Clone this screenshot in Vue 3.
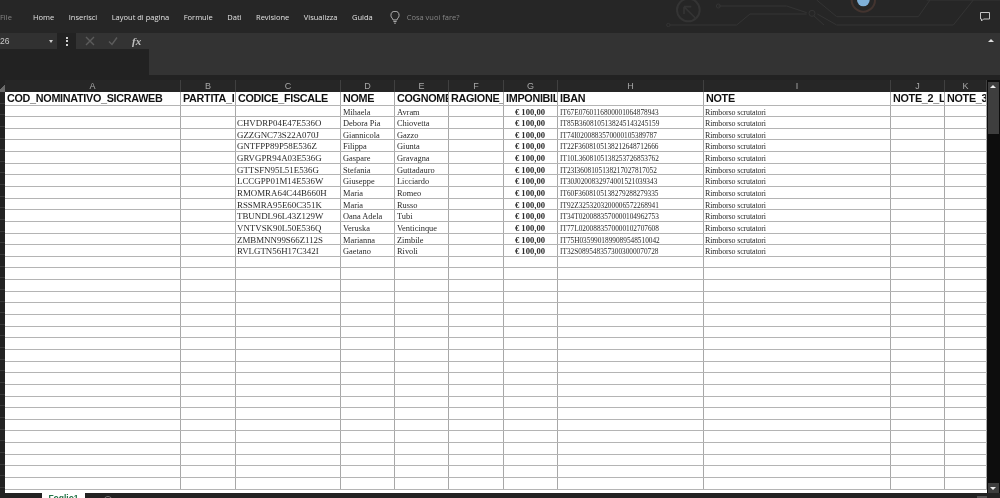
<script setup>
const columns = [
  { name: "A", width: 176 },
  { name: "B", width: 55 },
  { name: "C", width: 105 },
  { name: "D", width: 54 },
  { name: "E", width: 54 },
  { name: "F", width: 55 },
  { name: "G", width: 54 },
  { name: "H", width: 146 },
  { name: "I", width: 187 },
  { name: "J", width: 54 },
  { name: "K", width: 42 },
];

// cut as in the sheet: the columns are too narrow for the full titles
const headers = [
  "COD_NOMINATIVO_SICRAWEB",
  "PARTITA_I",
  "CODICE_FISCALE",
  "NOME",
  "COGNOME",
  "RAGIONE_",
  "IMPONIBIL",
  "IBAN",
  "NOTE",
  "NOTE_2_L",
  "NOTE_3",
];

const people = [
  ["", "Mihaela", "Avram", "IT67E0760116800001064878943"],
  ["CHVDRP04E47E536O", "Debora Pia", "Chiovetta", "IT85B3608105138245143245159"],
  ["GZZGNC73S22A070J", "Giannicola", "Gazzo", "IT74I0200883570000105389787"],
  ["GNTFPP89P58E536Z", "Filippa", "Giunta", "IT22F3608105138212648712666"],
  ["GRVGPR94A03E536G", "Gaspare", "Gravagna", "IT10L3608105138253726853762"],
  ["GTTSFN95L51E536G", "Stefania", "Guttadauro", "IT23I3608105138217027817052"],
  ["LCCGPP01M14E536W", "Giuseppe", "Licciardo", "IT30J0200832974001521039343"],
  ["RMOMRA64C44B660H", "Maria", "Romeo", "IT60F3608105138279288279335"],
  ["RSSMRA95E60C351K", "Maria", "Russo", "IT92Z3253203200006572268941"],
  ["TBUNDL96L43Z129W", "Oana Adela", "Tubi", "IT34T0200883570000104962753"],
  ["VNTVSK90L50E536Q", "Veruska", "Venticinque", "IT77L0200883570000102707608"],
  ["ZMBMNN99S66Z112S", "Marianna", "Zimbile", "IT75H0359901899089548510042"],
  ["RVLGTN56H17C342I", "Gaetano", "Rivoli", "IT32S0895483573003000070728"],
];

const emptyRows = Array.from({ length: 20 });
const menu = ["Home", "Inserisci", "Layout di pagina", "Formule", "Dati", "Revisione", "Visualizza", "Guida"];
const grid = { gridTemplateColumns: columns.map((c) => c.width + "px").join(" ") };
</script>

<template>
  <div class="app">
    <header class="topbar">
      <svg class="circuit" width="340" height="36" viewBox="0 0 1020 108" fill="none" stroke="#343434" stroke-width="3">
        <circle cx="85" cy="30" r="34" stroke-width="6" />
        <path d="M72 20v22M72 20h22M74 22l32 32" stroke-width="5" />
        <circle cx="25" cy="75" r="5" />
        <path d="M30 75h200l40-33h170M175 18h205l60 20M472 42l58 33h350l60-75M470 0l60 50h245l35-50M800 0h220" />
        <circle cx="175" cy="18" r="6" />
        <circle cx="456" cy="40" r="9" />
        <path d="M462 48l30 27" />
        <circle cx="610" cy="0" r="35" stroke="#43342f" stroke-width="6" />
        <circle cx="610" cy="0" r="19" fill="#7fb0d8" stroke="none" />
      </svg>
      <span class="file">File</span>
      <nav class="menu">
        <span v-for="item in menu" :key="item">{{ item }}</span>
      </nav>
      <svg class="bulb" width="10" height="13" viewBox="0 0 12 16" fill="none" stroke="#b5b5b5" stroke-width="1.2">
        <path d="M3.600 11C3.400 9 1 8.200 1 5.400a5 5 0 0 1 10 0C11 8.200 8.600 9 8.400 11zM4 13h4M5 15h2" />
      </svg>
      <span class="tell">Cosa vuoi fare?</span>
      <svg class="comment" width="10" height="10" viewBox="0 0 10 10" fill="none" stroke="#c4c4c4">
        <path d="M.5.5h9v6.500H3.500L1.500 9V7h-1z" />
      </svg>
    </header>

    <section class="formula">
      <div class="namebox"><span>26</span><i class="caret"></i></div>
      <span class="dots"><i></i><i></i><i></i></span>
      <div class="buttons">
        <svg width="10" height="10" viewBox="0 0 10 10" stroke="#5c5c5c" stroke-width="1.4" fill="none"><path d="M1 1l8 8M9 1l-8 8" /></svg>
        <svg width="10" height="10" viewBox="0 0 10 10" stroke="#5c5c5c" stroke-width="1.4" fill="none"><path d="M1 5.500l3 3 5-7" /></svg>
        <span class="fx">fx</span>
      </div>
      <div class="input"><i class="collapse"></i></div>
    </section>

    <main class="sheet">
      <div class="corner"></div>
      <div class="colheads" :style="grid">
        <span v-for="col in columns" :key="col.name">{{ col.name }}</span>
      </div>
      <div class="vbar">
        <button class="arrow up"></button>
        <div class="thumb"></div>
        <button class="arrow down"></button>
      </div>

      <div class="rowheads">
        <i v-for="n in 35" :key="n"></i>
      </div>
      <div class="cells">
        <div class="row head" :style="grid">
          <div v-for="h in headers" :key="h" class="cell">{{ h }}</div>
        </div>
        <div v-for="p in people" :key="p[3]" class="row" :style="grid">
          <div class="cell"></div>
          <div class="cell"></div>
          <div class="cell fiscal">{{ p[0] }}</div>
          <div class="cell">{{ p[1] }}</div>
          <div class="cell">{{ p[2] }}</div>
          <div class="cell"></div>
          <div class="cell money">€ 100,00</div>
          <div class="cell iban">{{ p[3] }}</div>
          <div class="cell note">Rimborso scrutatori</div>
          <div class="cell"></div>
          <div class="cell"></div>
        </div>
        <div v-for="(_, i) in emptyRows" :key="i" class="row" :style="grid">
          <div v-for="col in columns" :key="col.name" class="cell"></div>
        </div>
      </div>
    </main>

    <footer class="tabs">
      <span class="tab">Foglio1</span>
      <span class="add"></span>
      <span class="hthumb"></span>
    </footer>
  </div>
</template>

<style>
html,
body {
  margin: 0;
  background: #222;
  overflow: hidden;
}
</style>

<style scoped>
.app {
  width: 1000px;
  height: 498px;
  display: flex;
  flex-direction: column;
  overflow: hidden;
  background: #222;
  font-family: "Liberation Sans", Arial, sans-serif;
  filter: blur(0.3px);
}

.topbar {
  position: relative;
  height: 33px;
  flex: none;
  display: flex;
  align-items: center;
  padding-top: 1px;
  box-sizing: border-box;
  font-family: "Open Sans", sans-serif;
  font-size: 7.5px;
  color: #e0e0e0;
  background: #262626;
}

.circuit {
  position: absolute;
  right: 0;
  top: 0;
}

.file {
  width: 33px;
  color: #858585;
}

.menu {
  display: flex;
  gap: 14.5px;
}

.bulb {
  margin-left: 17px;
}

.tell {
  margin-left: 7px;
  color: #858585;
}

.comment {
  position: absolute;
  right: 10px;
  top: 12px;
}

.formula {
  height: 42px;
  flex: none;
  display: flex;
  align-items: flex-start;
  background: #222;
}

.namebox {
  width: 57px;
  height: 16px;
  display: flex;
  align-items: center;
  justify-content: space-between;
  padding: 0 4px 0 0;
  box-sizing: border-box;
  background: #313131;
  color: #c9c9c9;
  font-size: 8.5px;
}

.caret {
  border: 2.5px solid transparent;
  border-top: 3px solid #ccc;
  margin-top: 3px;
}

.dots {
  width: 19px;
  height: 16px;
  display: flex;
  flex-direction: column;
  align-items: center;
  justify-content: center;
  gap: 1.5px;
}

.dots i {
  width: 2px;
  height: 2px;
  background: #d0d0d0;
}

.buttons {
  width: 73px;
  height: 16px;
  display: flex;
  align-items: center;
  gap: 13px;
  padding-left: 9px;
  box-sizing: border-box;
  background: #333;
}

.fx {
  margin-left: 1px;
  font-family: "Liberation Serif", serif;
  font-style: italic;
  font-size: 11px;
  font-weight: 700;
  color: #c0c0c0;
}

.input {
  flex: 1;
  height: 42px;
  position: relative;
  background: #333;
}

.collapse {
  position: absolute;
  right: 6px;
  top: 3px;
  border: 3px solid transparent;
  border-bottom: 3px solid #ddd;
}

.sheet {
  flex: none;
  margin-top: 5px;
  display: grid;
  grid-template-columns: 5px 982px 13px;
  grid-template-rows: 12px 401px;
}

.corner {
  background: linear-gradient(135deg, transparent 55%, #6a6a6a 55%);
}

.colheads {
  display: grid;
  height: 12px;
  font-size: 9px;
  line-height: 12px;
  text-align: center;
  color: #a8a8a8;
  background: #262626;
}

.colheads span {
  border-right: 1px solid #404040;
  box-sizing: border-box;
}

.vbar {
  grid-column: 3;
  grid-row: 1 / 3;
  display: flex;
  flex-direction: column;
  align-items: center;
  background: #0d0d0d;
}

.arrow {
  width: 11px;
  height: 10px;
  padding: 0;
  border: 0;
  position: relative;
  flex: none;
  background: #3e3e3e;
}

.arrow.up {
  margin-top: 2px;
}

.arrow::after {
  content: "";
  position: absolute;
  left: 2px;
  border: 3.5px solid transparent;
}

.arrow.up::after {
  top: 0;
  border-bottom: 3.5px solid #eee;
}

.arrow.down::after {
  top: 4px;
  border-top: 3.5px solid #eee;
}

.thumb {
  width: 11px;
  height: 42px;
  background: #3e3e3e;
}

.arrow.down {
  margin-top: auto;
}

.rowheads {
  display: flex;
  flex-direction: column;
  overflow: hidden;
  background: #232323;
}

.rowheads i {
  display: block;
  flex: none;
  height: 11.65px;
  box-sizing: border-box;
  border-bottom: 1px solid #3a3a3a;
}

.cells {
  overflow: hidden;
  background: #fff;
}

.row {
  display: grid;
  height: 11.65px;
  box-sizing: border-box;
  border-bottom: 1px solid #b4b4b4;
}

.row.head {
  height: 13.5px;
}

.cell {
  min-width: 0;
  overflow: hidden;
  white-space: nowrap;
  box-sizing: border-box;
  padding-left: 2px;
  border-right: 1px solid #a8a8a8;
  font-family: "Liberation Serif", serif;
  font-size: 8.4px;
  line-height: 13.5px;
  color: #2a2a2a;
}

.head .cell {
  font-family: "Liberation Sans", Arial, sans-serif;
  font-size: 10.8px;
  font-weight: 700;
  letter-spacing: -0.3px;
  line-height: 13px;
  color: #111;
}

.cell.fiscal {
  padding-left: 1px;
  font-size: 8.9px;
}

.cell.money {
  padding: 0 12px 0 0;
  text-align: right;
  font-size: 8.6px;
  font-weight: 700;
  line-height: 12.5px;
}

.cell.iban {
  font-size: 7.3px;
}

.cell.note {
  padding-left: 1px;
  font-size: 8px;
  letter-spacing: -0.15px;
}

.tabs {
  flex: 1;
  display: flex;
  align-items: flex-start;
  background: #222;
}

.tab {
  margin-left: 42px;
  width: 43px;
  height: 5px;
  overflow: hidden;
  background: #fff;
  color: #217346;
  font-size: 8.5px;
  font-weight: 700;
  line-height: 11px;
  text-align: center;
}

.add {
  width: 8px;
  height: 8px;
  margin: 3px 0 0 18px;
  border: 1px solid #777;
  border-radius: 50%;
}

.hthumb {
  width: 10px;
  height: 2px;
  margin: 3px 13px 0 auto;
  background: #555;
}
</style>
